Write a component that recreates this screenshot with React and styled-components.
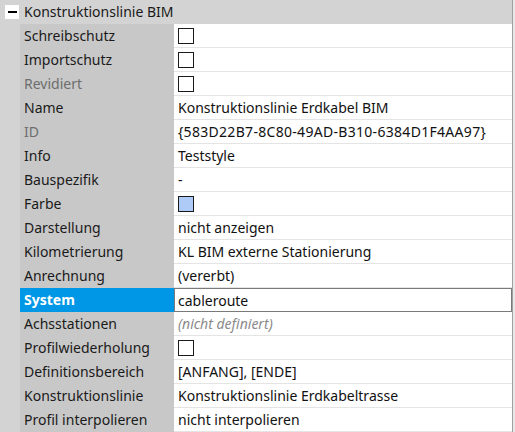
import React from "react";
import styled, { createGlobalStyle } from "styled-components";

const GlobalStyle = createGlobalStyle`
	html, body {
		margin: 0;
		padding: 0;
		background: #e8e8e8;
	}
	body {
		font-family: "Noto Sans", "Open Sans", sans-serif;
		font-size: 14px;
		color: #1a1a1a;
	}
`

const Frame = styled.div`
	display: flex;
	width: 515px;
	height: 432px;
	overflow: hidden;
	background: #e8e8e8;
`

const Grid = styled.div`
	width: 512px;
	border-right: 1px solid #a0a0a0;
	background: #d3d3d3;
	display: flex;
	flex-direction: column;
`

const Header = styled.div`
	display: flex;
	align-items: center;
	height: 24px;
	background: #d3d3d3;
`

const Toggle = styled.div`
	width: 14px;
	height: 14px;
	margin: 0 5px 0 5px;
	background: #fff;
	display: flex;
	align-items: center;
	justify-content: center;
	&::after {
		content: "";
		width: 9px;
		height: 2px;
		background: #000;
	}
`

const HeaderText = styled.span`
	line-height: 24px;
	white-space: nowrap;
`

const Row = styled.div`
	display: flex;
	height: 24px;
	margin-left: 20px;
`

const Label = styled.div`
	width: 150px;
	flex: none;
	padding-left: 4px;
	line-height: 24px;
	white-space: nowrap;
	background: ${p => (p.selected ? "#0097e6" : "#c8c8c8")};
	color: ${p => (p.selected ? "#fff" : p.muted ? "#6d6d6d" : "#1a1a1a")};
	font-weight: ${p => (p.selected ? 700 : 400)};
`

const Value = styled.div`
	flex: 1;
	display: flex;
	align-items: center;
	padding-left: 4px;
	background: #fff;
	white-space: nowrap;
	box-sizing: border-box;
	border-bottom: 1px solid #e4e4e4;
	${p => p.editing && `
		border: 1px solid #7a7a7a;
		padding-left: 3px;
	`}
	color: ${p => (p.placeholder ? "#8a8a8a" : "#111")};
	font-style: ${p => (p.placeholder ? "italic" : "normal")};
	letter-spacing: ${p => (p.spaced ? "0.3px" : "normal")};
`

const Check = styled.span`
	display: inline-block;
	width: 16px;
	height: 16px;
	box-sizing: border-box;
	border: 1px solid #1a1a1a;
	background: ${p => p.color ?? "#fff"};
	margin-top: 1px;
`

const rows = [
	{ label: "Schreibschutz", check: true },
	{ label: "Importschutz", check: true },
	{ label: "Revidiert", check: true, muted: true },
	{ label: "Name", value: "Konstruktionslinie Erdkabel BIM" },
	{ label: "ID", value: "{583D22B7-8C80-49AD-B310-6384D1F4AA97}", muted: true, spaced: true },
	{ label: "Info", value: "Teststyle" },
	{ label: "Bauspezifik", value: "-" },
	{ label: "Farbe", check: true, color: "#aecbf7" },
	{ label: "Darstellung", value: "nicht anzeigen" },
	{ label: "Kilometrierung", value: "KL BIM externe Stationierung" },
	{ label: "Anrechnung", value: "(vererbt)" },
	{ label: "System", value: "cableroute", selected: true },
	{ label: "Achsstationen", value: "(nicht definiert)", placeholder: true },
	{ label: "Profilwiederholung", check: true },
	{ label: "Definitionsbereich", value: "[ANFANG], [ENDE]" },
	{ label: "Konstruktionslinie", value: "Konstruktionslinie Erdkabeltrasse" },
	{ label: "Profil interpolieren", value: "nicht interpolieren" },
]

const App = () => {
	return (
		<Frame>
			<GlobalStyle />
			<Grid>
				<Header>
					<Toggle />
					<HeaderText>Konstruktionslinie BIM</HeaderText>
				</Header>
				{rows.map(row => (
					<Row key={row.label}>
						<Label muted={row.muted} selected={row.selected}>{row.label}</Label>
						<Value editing={row.selected} placeholder={row.placeholder} spaced={row.spaced}>
							{row.check ? <Check color={row.color} /> : row.value}
						</Value>
					</Row>
				))}
			</Grid>
		</Frame>
	)
}

export default App
